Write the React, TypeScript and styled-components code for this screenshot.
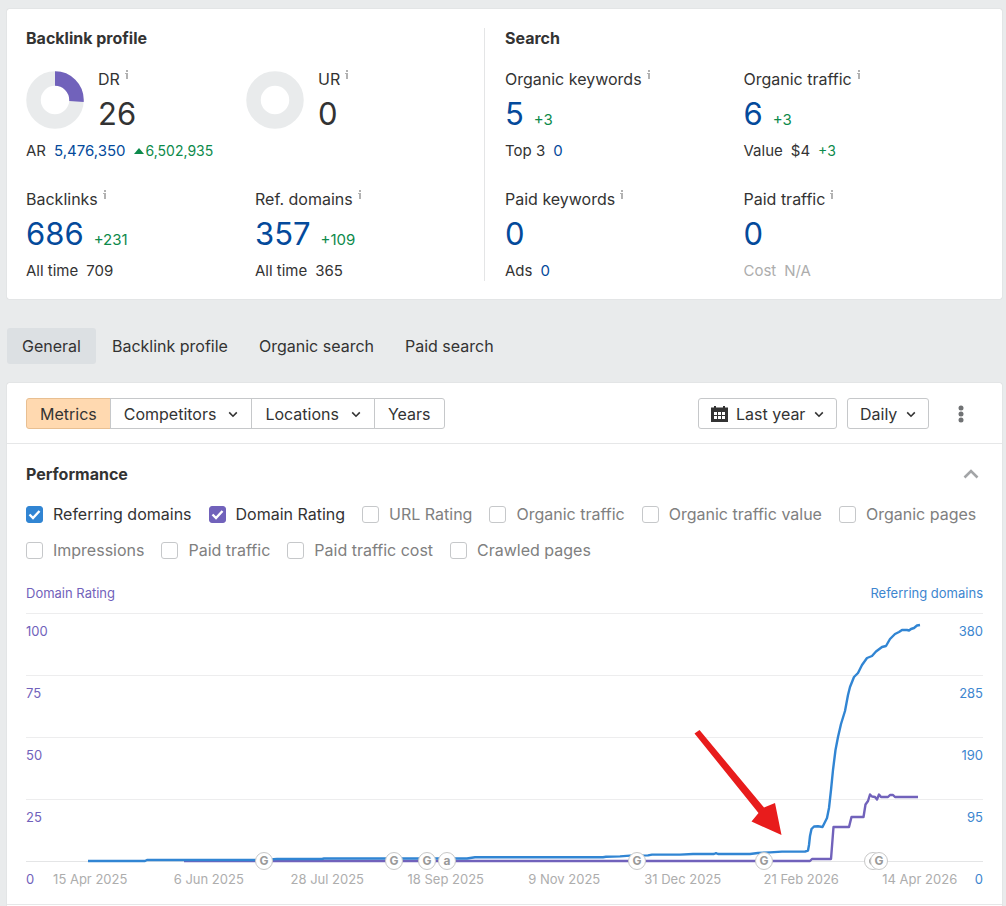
import React from "react";
import styled, { createGlobalStyle } from "styled-components";

const GlobalStyle = createGlobalStyle`
  *, *::before, *::after { box-sizing: border-box; }
  body {
    margin: 0;
    background: #e9ebec;
    color: #333;
    font-family: Inter, "Liberation Sans", sans-serif;
    font-size: 16px;
    line-height: 24px;
  }
  button, select, input { font: inherit; color: inherit; margin: 0; }
  a { color: inherit; text-decoration: none; }
`;

const Page = styled.main`
  padding: 9px 4px 0 7px;
`;

const Card = styled.section`
  background: #fff;
  border-radius: 2px;
  box-shadow: 0 0 1px rgba(0, 0, 0, 0.25);
`;

const Overview = styled(Card)`
  display: grid;
  grid-template-columns: 458fr 498fr;
  padding: 19px 20px 18px 19px;
`;

const Group = styled.div<{ $divided?: boolean }>`
  border-left: ${(p) => (p.$divided ? "1px solid #e4e5e6" : "0")};
  padding-left: ${(p) => (p.$divided ? "20px" : "0")};
`;

const Title = styled.h2`
  margin: 0;
  font-size: 16px;
  line-height: 20px;
  font-weight: 700;
`;

const MetricRow = styled.div`
  display: grid;
  grid-template-columns: 1fr 1fr;
  margin-top: 26px;
  ${Title} + & { margin-top: 19px; }
`;

const Label = styled.div`
  display: flex;
  gap: 4px;
  line-height: 24px;
  white-space: nowrap;
`;

const InfoSvg = styled.svg`
  width: 5px;
  height: 9px;
  margin-top: 3px;
`;

const ValueLine = styled.div`
  display: flex;
  align-items: baseline;
  gap: 10px;
  height: 46px;
  line-height: 46px;
`;

const Value = styled.span`
  font-size: 31px;
`;

const ValueLink = styled.a`
  font-size: 31px;
  color: #044a9b;
`;

const Delta = styled.span`
  font-size: 15px;
  color: #0d8a4b;
`;

const SubLine = styled.div<{ $muted?: boolean }>`
  display: flex;
  align-items: center;
  gap: 8px;
  margin-top: 4px;
  font-size: 15px;
  line-height: 20px;
  color: ${(p) => (p.$muted ? "#adadad" : "#333")};
`;

const SubLink = styled.a`
  color: #044a9b;
`;

const Rise = styled.span`
  display: flex;
  align-items: center;
  gap: 2px;
  font-size: 14px;
  color: #0d8a4b;
`;

const Ratings = styled.div`
  margin-top: 19px;
`;

const GaugeRow = styled.div`
  display: grid;
  grid-template-columns: 220fr 238fr;
`;

const Gauge = styled.div`
  display: flex;
  gap: 14px;
`;

const Ring = styled.svg`
  width: 58px;
  height: 58px;
  margin-top: 4px;
`;

const Tabs = styled.nav`
  display: flex;
  gap: 1px;
  margin: 29px 0 19px;
`;

const Tab = styled.a<{ $active?: boolean }>`
  padding: 6px 15px;
  border-radius: 3px;
  background: ${(p) => (p.$active ? "#dce0e3" : "transparent")};
`;

const Toolbar = styled.div`
  display: flex;
  align-items: center;
  justify-content: space-between;
  padding: 15px 19px 14px;
  border-bottom: 1px solid #e6e7e8;
`;

const Segments = styled.div`
  display: flex;
`;

const Segment = styled.button<{ $active?: boolean }>`
  display: flex;
  align-items: center;
  gap: 12px;
  height: 31px;
  padding: 0 13px;
  margin-left: -1px;
  border: 1px solid ${(p) => (p.$active ? "#e8bf92" : "#c6c8ca")};
  background: ${(p) => (p.$active ? "#ffd9b0" : "#fff")};
  &:first-child { border-radius: 3px 0 0 3px; margin-left: 0; }
  &:last-child { border-radius: 0 3px 3px 0; }
`;

const Actions = styled.div`
  display: flex;
  align-items: center;
  gap: 10px;
`;

const Picker = styled.label`
  display: flex;
  align-items: center;
  gap: 8px;
  height: 31px;
  padding: 0 12px;
  border: 1px solid #c6c8ca;
  border-radius: 3px;
`;

const PickerSelect = styled.select`
  appearance: none;
  border: 0;
  padding: 0;
  background: none;
  outline: none;
`;

const IconButton = styled.button`
  display: flex;
  align-items: center;
  justify-content: center;
  width: 24px;
  height: 24px;
  padding: 0;
  border: 0;
  background: none;
`;

const MoreButton = styled(IconButton)`
  margin: 0 10px;
`;

const Panel = styled.div`
  padding: 18px 19px 15px;
  border-bottom: 1px solid #e6e7e8;
`;

const PanelHead = styled.div`
  display: flex;
  align-items: center;
  justify-content: space-between;
`;

const PanelFoot = styled.div`
  height: 20px;
`;

const Checks = styled.div`
  display: flex;
  flex-wrap: wrap;
  gap: 12px 17px;
  margin-top: 16px;
`;

const Check = styled.label<{ $on?: boolean }>`
  display: flex;
  align-items: center;
  gap: 10px;
  white-space: nowrap;
  color: ${(p) => (p.$on ? "#333" : "#808080")};
`;

const BoxWrap = styled.span`
  display: grid;
  place-items: center;
  > * { grid-area: 1 / 1; }
`;

const Box = styled.input<{ $color?: string }>`
  appearance: none;
  width: 17px;
  height: 17px;
  border: 1px solid #c6c8ca;
  border-radius: 3px;
  background: #fff;
  &:checked {
    border-color: ${(p) => p.$color};
    background: ${(p) => p.$color};
  }
`;

const Tick = styled.svg`
  width: 13px;
  height: 13px;
  pointer-events: none;
`;

const AxisTitles = styled.div`
  display: flex;
  justify-content: space-between;
  margin: 21px 0 10px;
  font-size: 13px;
  line-height: 20px;
`;

const AxisText = styled.span<{ $side: "left" | "right" }>`
  color: ${(p) => (p.$side === "left" ? "#7162bb" : "#3d86cf")};
`;

const Chart = styled.div`
  position: relative;
  font-size: 13px;
  line-height: 20px;
`;

const GridRow = styled.div`
  display: flex;
  justify-content: space-between;
  height: 62px;
  padding-top: 7px;
  border-top: 1px solid #ededee;
`;

const BaseRow = styled.div`
  display: grid;
  padding-top: 7px;
  border-top: 1px solid #e4e5e6;
  > * { grid-area: 1 / 1; }
`;

const Zeros = styled.div`
  display: flex;
  justify-content: space-between;
`;

const Dates = styled.div`
  display: grid;
  grid-template-columns: repeat(8, 1fr);
  padding: 0 4px 0 5px;
  text-align: center;
  white-space: nowrap;
  color: #adadad;
`;

const Plot = styled.svg`
  position: absolute;
  top: 0;
  left: 0;
  width: 100%;
  height: 250px;
`;

const Marker = styled.span`
  position: absolute;
  top: 239px;
  display: flex;
  align-items: center;
  justify-content: center;
  width: 18px;
  height: 18px;
  margin-left: -9px;
  border: 1px solid #c8c8c8;
  border-radius: 50%;
  background: #fff;
  color: #999;
  font-size: 12px;
  font-weight: 700;
  line-height: 16px;
`;

const Info = () => (
  <InfoSvg viewBox="0 0 5 9" fill="#b2b2b2" aria-hidden="true">
    <path d="M2 0h2v2H2zM1 3h3v6H2V4H1z" />
  </InfoSvg>
);

const Chevron = () => (
  <svg width="10" height="10" viewBox="0 0 10 10" fill="none" stroke="#333" strokeWidth="1.6" aria-hidden="true">
    <path d="M1.2 3.4 5 7.2 8.8 3.4" />
  </svg>
);

const CalendarIcon = () => (
  <svg width="17" height="16" viewBox="0 0 17 16" aria-hidden="true">
    <path fill="#333" d="M0 1.5h3V0h2v1.5h7V0h2v1.5h3V16H0z" />
    <path fill="#fff" d="M3 6h3v3H3zM7 6h3v3H7zM11 6h3v3h-3zM3 10h3v3H3zM7 10h3v3H7zM11 10h3v3h-3z" />
  </svg>
);

interface MetricProps {
  label: string;
  value: string;
  delta?: string;
  muted?: boolean;
  children: React.ReactNode;
}

const Metric = ({ label, value, delta, muted, children }: MetricProps) => (
  <div>
    <Label>
      {label}
      <Info />
    </Label>
    <ValueLine>
      <ValueLink href="#">{value}</ValueLink>
      {delta && <Delta>{delta}</Delta>}
    </ValueLine>
    <SubLine $muted={muted}>{children}</SubLine>
  </div>
);

const CIRCUMFERENCE = 2 * Math.PI * 21.5;

const Rating = ({ label, value }: { label: string; value: number }) => (
  <Gauge>
    <Ring viewBox="0 0 58 58" fill="none" strokeWidth="14.5" aria-hidden="true">
      <circle cx="29" cy="29" r="21.5" stroke="#e9ebec" />
      {value > 0 && (
        <circle
          cx="29"
          cy="29"
          r="21.5"
          stroke="#7162bb"
          strokeDasharray={`${(CIRCUMFERENCE * value) / 100} ${CIRCUMFERENCE}`}
          transform="rotate(-90 29 29)"
        />
      )}
    </Ring>
    <div>
      <Label>
        {label}
        <Info />
      </Label>
      <ValueLine>
        <Value>{value}</Value>
      </ValueLine>
    </div>
  </Gauge>
);

const checks = [
  { name: "Referring domains", color: "#3185d3" },
  { name: "Domain Rating", color: "#7162bb" },
  { name: "URL Rating" },
  { name: "Organic traffic" },
  { name: "Organic traffic value" },
  { name: "Organic pages" },
  { name: "Impressions" },
  { name: "Paid traffic" },
  { name: "Paid traffic cost" },
  { name: "Crawled pages" },
];

const ticks = [
  ["100", "380"],
  ["75", "285"],
  ["50", "190"],
  ["25", "95"],
];

const dates = [
  "15 Apr 2025",
  "6 Jun 2025",
  "28 Jul 2025",
  "18 Sep 2025",
  "9 Nov 2025",
  "31 Dec 2025",
  "21 Feb 2026",
  "14 Apr 2026",
];

const PLOT_WIDTH = 957;

/* A marker without text lies under its neighbour, with only its left edge showing. */
const markers = [
  { x: 238, text: "G" },
  { x: 368, text: "G" },
  { x: 401, text: "G" },
  { x: 421, text: "a" },
  { x: 611, text: "G" },
  { x: 738, text: "G" },
  { x: 847 },
  { x: 853, text: "G" },
];

const referringDomains =
  "62,248 119,248 121,247 237,247 251,246 296,246 298,245.5 441,245.5 449,244.2 577,244.2 580,243.8 594,243.4 604,242.6 622,242.4 626,241.6 654,241.6 667,241 688,241 690,240.2 692,241 724,241 732,240 744,239.4 756,238.6 779,238.6 782,237.5 783,232 784,223 785.5,216 788,213.5 792,213.3 796.5,214 798,211 801,205 803,195 805,177 807,157 809.5,137 812,124 815,111 819,98 822,82 824,74 828,64 832,60 836,52 841,45 846,43 850,38.5 856,34 860,33 864,26 869,21 873,19 876,17 881,17 883,17.5 885,16 888,15 891,12.5 894,12";

const domainRating =
  "158,248 784,248 786,246 805,246 807.5,214 823,214 825.5,204 837.5,204 839.5,191.5 842,188 844,181.5 846,183.5 849,184 851,186.5 853,181.5 855,184 862,184 864,182 867,182 869,184 892,184";

export default function App() {
  return (
    <>
      <GlobalStyle />
      <Page>
        <Overview>
          <Group>
            <Title>Backlink profile</Title>
            <Ratings>
              <GaugeRow>
                <Rating label="DR" value={26} />
                <Rating label="UR" value={0} />
              </GaugeRow>
              <SubLine>
                <span>AR</span>
                <SubLink href="#">5,476,350</SubLink>
                <Rise>
                  <svg width="10" height="6" viewBox="0 0 10 6" fill="currentColor" aria-hidden="true">
                    <path d="M0 6 5 0l5 6z" />
                  </svg>
                  6,502,935
                </Rise>
              </SubLine>
            </Ratings>
            <MetricRow>
              <Metric label="Backlinks" value="686" delta="+231">
                <span>All time</span>
                <span>709</span>
              </Metric>
              <Metric label="Ref. domains" value="357" delta="+109">
                <span>All time</span>
                <span>365</span>
              </Metric>
            </MetricRow>
          </Group>
          <Group $divided>
            <Title>Search</Title>
            <MetricRow>
              <Metric label="Organic keywords" value="5" delta="+3">
                <span>Top 3</span>
                <SubLink href="#">0</SubLink>
              </Metric>
              <Metric label="Organic traffic" value="6" delta="+3">
                <span>Value</span>
                <span>$4</span>
                <Rise>+3</Rise>
              </Metric>
            </MetricRow>
            <MetricRow>
              <Metric label="Paid keywords" value="0">
                <span>Ads</span>
                <SubLink href="#">0</SubLink>
              </Metric>
              <Metric label="Paid traffic" value="0" muted>
                <span>Cost</span>
                <span>N/A</span>
              </Metric>
            </MetricRow>
          </Group>
        </Overview>

        <Tabs>
          <Tab href="#" $active>General</Tab>
          <Tab href="#">Backlink profile</Tab>
          <Tab href="#">Organic search</Tab>
          <Tab href="#">Paid search</Tab>
        </Tabs>

        <Card>
          <Toolbar>
            <Segments>
              <Segment $active>Metrics</Segment>
              <Segment>Competitors <Chevron /></Segment>
              <Segment>Locations <Chevron /></Segment>
              <Segment>Years</Segment>
            </Segments>
            <Actions>
              <Picker>
                <CalendarIcon />
                <PickerSelect aria-label="Period">
                  <option>Last year</option>
                </PickerSelect>
                <Chevron />
              </Picker>
              <Picker>
                <PickerSelect aria-label="Interval">
                  <option>Daily</option>
                </PickerSelect>
                <Chevron />
              </Picker>
              <MoreButton aria-label="More">
                <svg width="6" height="18" viewBox="0 0 6 18" fill="#707274">
                  <circle cx="3" cy="3" r="2.5" />
                  <circle cx="3" cy="9" r="2.5" />
                  <circle cx="3" cy="15" r="2.5" />
                </svg>
              </MoreButton>
            </Actions>
          </Toolbar>

          <Panel>
            <PanelHead>
              <Title>Performance</Title>
              <IconButton aria-label="Collapse">
                <svg width="16" height="10" viewBox="0 0 16 10" fill="none" stroke="#a3a5a7" strokeWidth="2.6">
                  <path d="M1.5 8.5 8 2l6.5 6.5" />
                </svg>
              </IconButton>
            </PanelHead>

            <Checks>
              {checks.map((c) => (
                <Check key={c.name} $on={!!c.color}>
                  <BoxWrap>
                    <Box type="checkbox" defaultChecked={!!c.color} $color={c.color} />
                    {c.color && (
                      <Tick viewBox="0 0 13 13" fill="none" stroke="#fff" strokeWidth="2.4">
                        <path d="M1.5 6.5 5 10l6.5-7" />
                      </Tick>
                    )}
                  </BoxWrap>
                  {c.name}
                </Check>
              ))}
            </Checks>

            <AxisTitles>
              <AxisText $side="left">Domain Rating</AxisText>
              <AxisText $side="right">Referring domains</AxisText>
            </AxisTitles>

            <Chart>
              {ticks.map(([left, right]) => (
                <GridRow key={left}>
                  <AxisText $side="left">{left}</AxisText>
                  <AxisText $side="right">{right}</AxisText>
                </GridRow>
              ))}
              <BaseRow>
                <Zeros>
                  <AxisText $side="left">0</AxisText>
                  <AxisText $side="right">0</AxisText>
                </Zeros>
                <Dates>
                  {dates.map((d) => (
                    <span key={d}>{d}</span>
                  ))}
                </Dates>
              </BaseRow>
              <Plot
                viewBox={`0 0 ${PLOT_WIDTH} 250`}
                preserveAspectRatio="none"
                fill="none"
                strokeWidth="2.4"
                strokeLinejoin="round"
              >
                <polyline points={domainRating} stroke="#7162bb" />
                <polyline points={referringDomains} stroke="#3185d3" />
                <path fill="#e81c1c" d="M668.5 120.5 673.5 117 738 194.5 749 190 755.5 222 725.5 208.5 732.5 200z" />
              </Plot>
              {markers.map((m) => (
                <Marker key={m.x} style={{ left: `${(m.x / PLOT_WIDTH) * 100}%` }}>
                  {m.text ?? (
                    <svg width="8" height="8" viewBox="0 0 8 8" fill="none" stroke="#999" strokeWidth="1.8">
                      <path d="M4 1a3 3 0 0 0 0 6" />
                    </svg>
                  )}
                </Marker>
              ))}
            </Chart>
          </Panel>
          <PanelFoot />
        </Card>
      </Page>
    </>
  );
}
